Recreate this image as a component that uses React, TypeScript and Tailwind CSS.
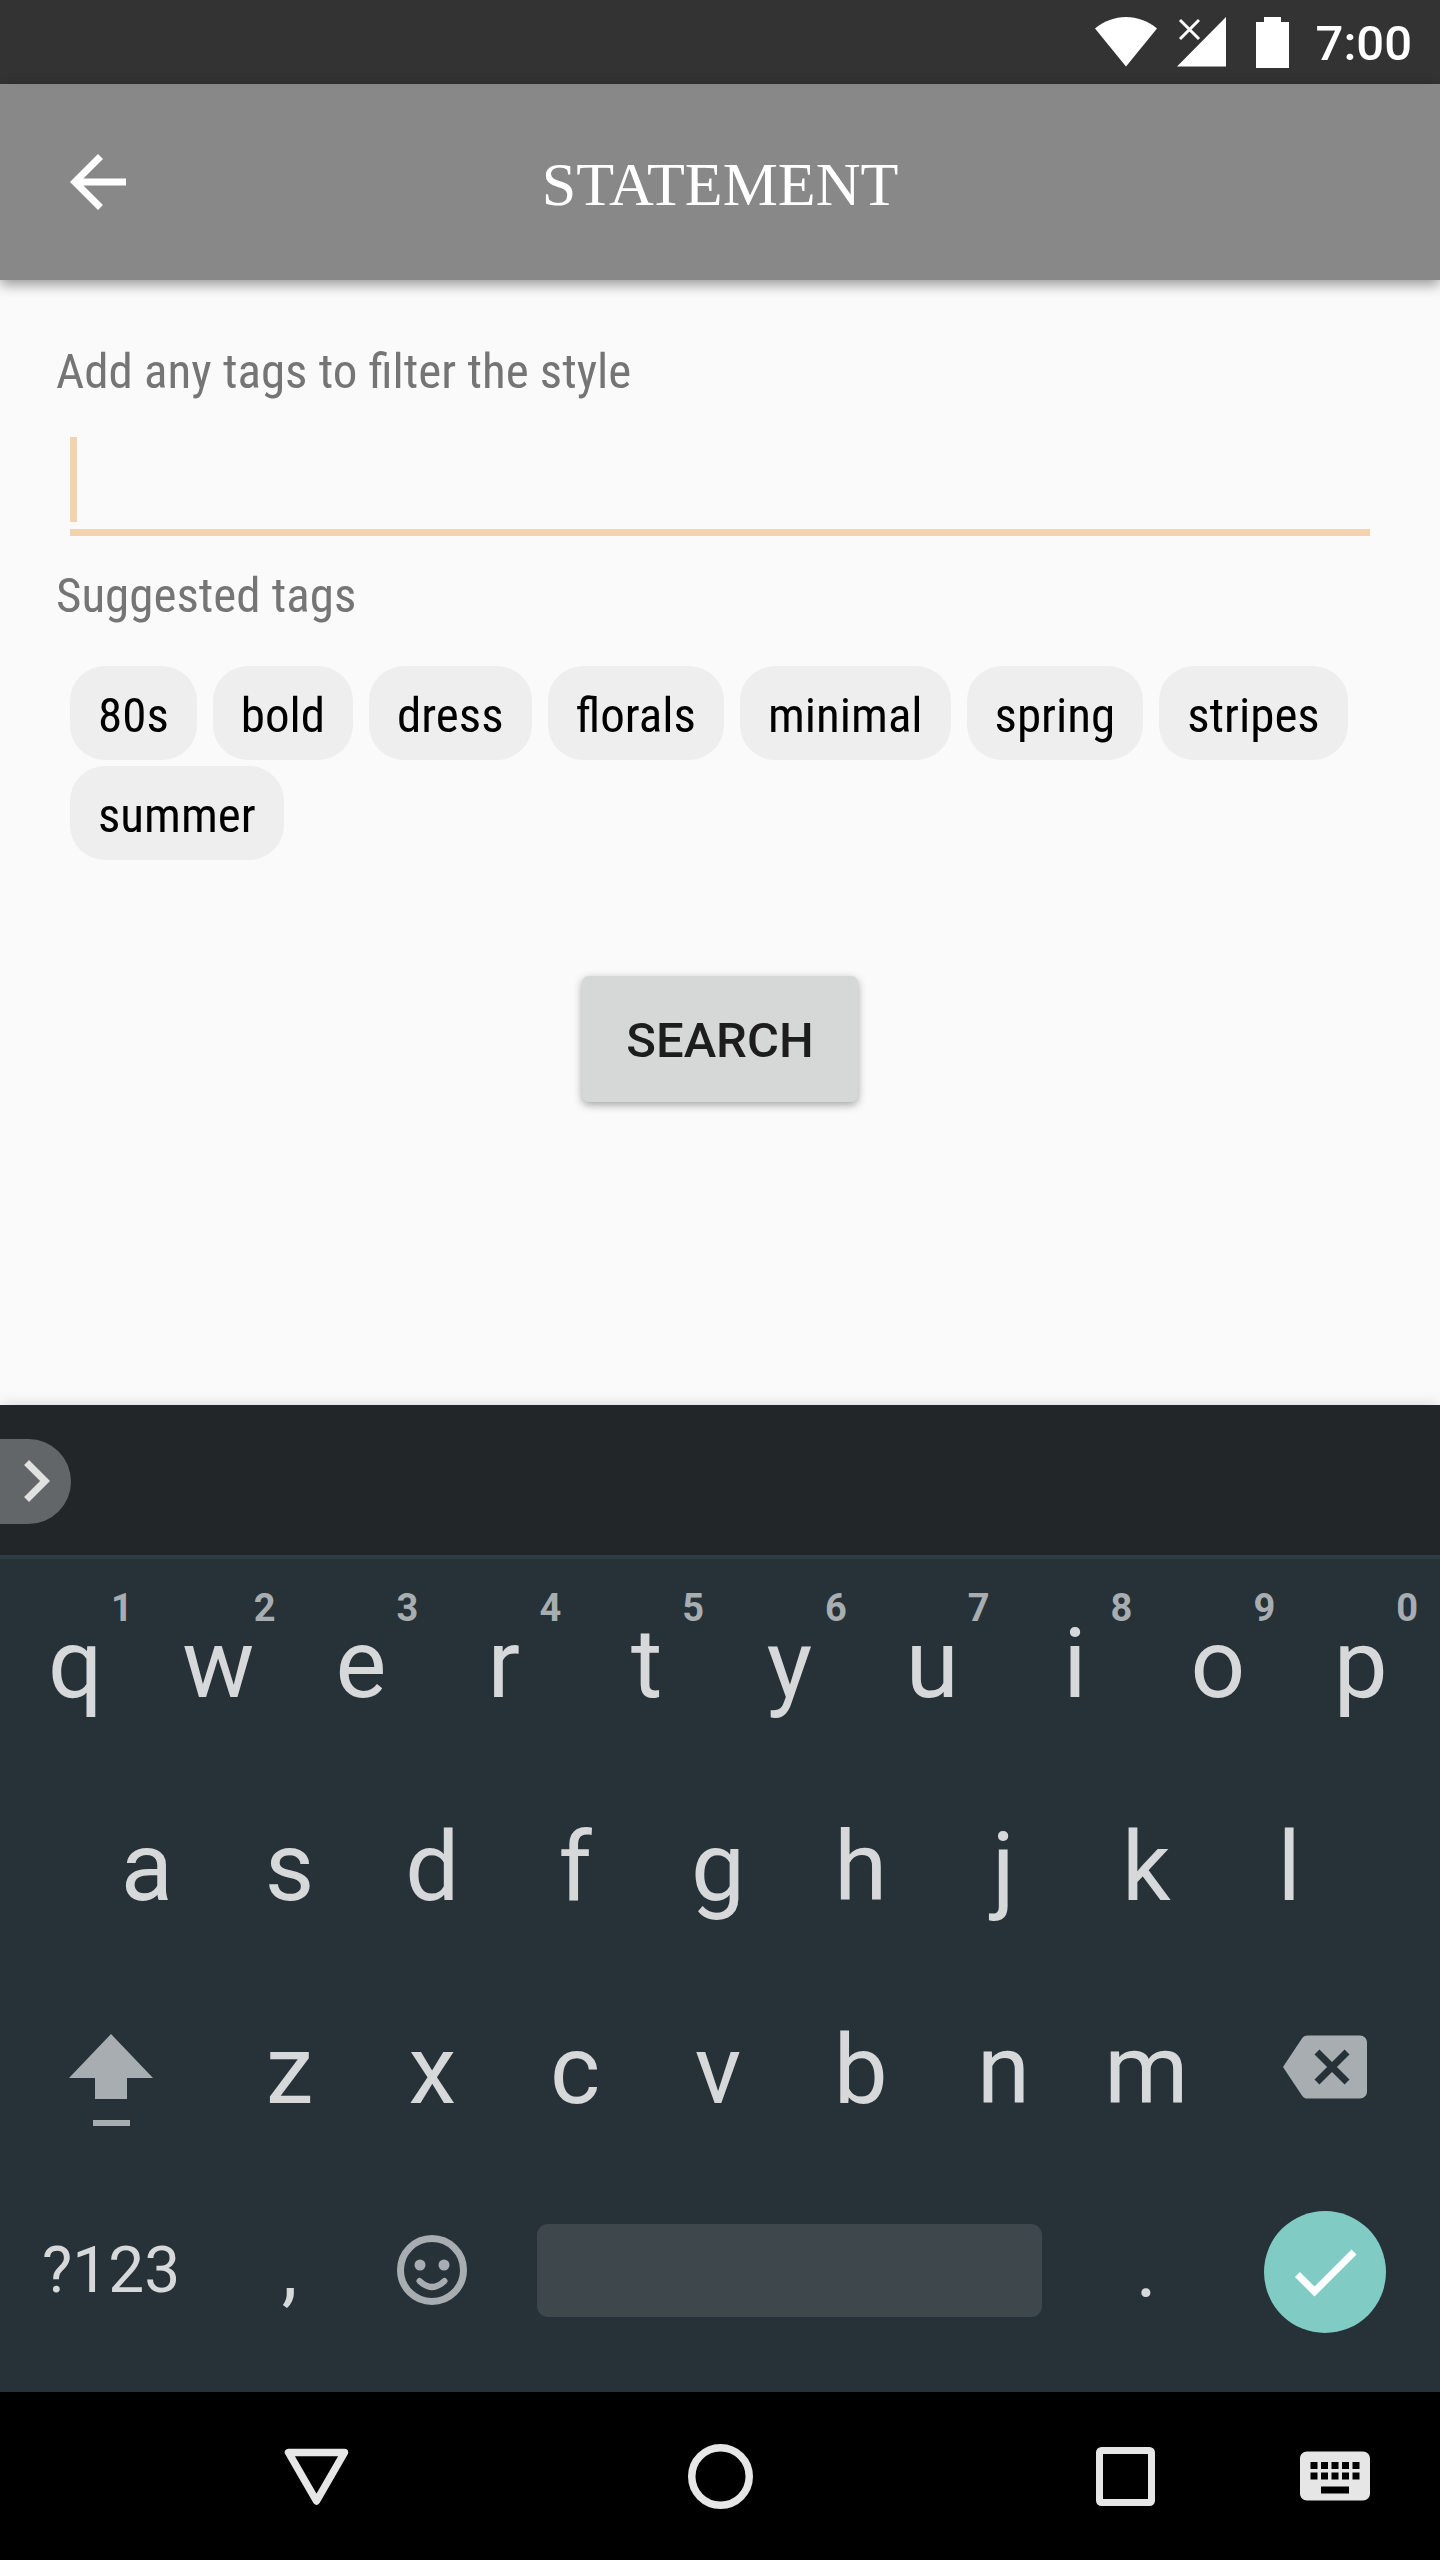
import type { ReactNode } from "react";

const tags = ["80s", "bold", "dress", "florals", "minimal", "spring", "stripes", "summer"];
const topRow = ["q", "w", "e", "r", "t", "y", "u", "i", "o", "p"];
const homeRow = ["a", "s", "d", "f", "g", "h", "j", "k", "l"];
const bottomRow = ["z", "x", "c", "v", "b", "n", "m"];

function Icon({ d, className }: { d: string; className: string }) {
  return (
    <svg viewBox="0 0 24 24" className={`size-[84px] shrink-0 ${className}`} fill="currentColor" aria-hidden="true">
      <path d={d} />
    </svg>
  );
}

function StatusBar() {
  return (
    <div className="flex h-[84px] items-center justify-end bg-[#333333] pr-7 text-white">
      <svg viewBox="0 0 62 50" className="mr-5 h-[50px] w-[62px]" fill="currentColor" aria-label="Wi-Fi">
        <path d="M31 49.5 0 11.5C9 4 20 0 31 0s22 4 31 11.5z" />
      </svg>
      <svg viewBox="0 0 50 50" className="mr-[29px] h-[50px] w-[50px]" fill="currentColor" aria-label="No signal">
        <path d="M49 0v49.500H0z" />
        <path d="M3 3l19 19M22 3L3 22" stroke="currentColor" strokeWidth="3" fill="none" />
      </svg>
      <svg viewBox="0 0 33 51" className="mr-[27px] h-[51px] w-[33px]" fill="currentColor" aria-label="Battery">
        <path d="M8 0h17v5h8v46H0V5h8z" />
      </svg>
      <time className="pt-1 text-[49px] leading-[58px] font-medium">7:00</time>
    </div>
  );
}

function Header() {
  return (
    <header className="z-10 grid h-[196px] grid-cols-[1fr_auto_1fr] items-center bg-[#888888] px-14 text-white shadow-[0_5px_12px_rgba(0,0,0,0.38)]">
      <button type="button" aria-label="Back" className="justify-self-start">
        <Icon d="M20 11H7.830l5.590-5.590L12 4l-8 8 8 8 1.410-1.410L7.830 13H20v-2z" className="text-white" />
      </button>
      <h1 className="pt-1 font-['Liberation_Serif',serif] text-[62px] leading-[68px]">STATEMENT</h1>
    </header>
  );
}

function SearchForm() {
  return (
    <main className="flex-1 bg-[#fafafa] px-14 pt-[63px] font-['Roboto_Condensed',Roboto,sans-serif] text-[49px] leading-[58px]">
      <label htmlFor="tags" className="block text-[#757575]">
        Add any tags to filter the style
      </label>
      <div className="relative mx-3.5 mt-[27px]">
        <input
          id="tags"
          type="text"
          className="block h-[108px] w-full border-b-[7px] border-[#f1d3b0] bg-transparent px-2 text-black caret-transparent outline-none"
        />
        <span className="absolute top-[9px] left-0 h-[85px] w-[7px] bg-[#f1d3b0]" />
      </div>
      <h2 className="mt-[31px] text-[#757575]">Suggested tags</h2>
      <ul className="mt-[41px] flex flex-wrap gap-x-4 gap-y-1.5 pl-3.5">
        {tags.map((tag) => (
          <li key={tag}>
            <button type="button" className="h-[94px] rounded-[35px] bg-[#eeeeee] px-7 pt-1.5 text-black">
              {tag}
            </button>
          </li>
        ))}
      </ul>
      <div className="mt-[116px] flex justify-center">
        <button
          type="button"
          className="h-[126px] rounded-[7px] bg-[#d6d8d7] px-11 pt-1 font-[Roboto,sans-serif] font-medium text-[#1d1d1d] shadow-[0_3px_8px_rgba(0,0,0,0.35)]"
        >
          SEARCH
        </button>
      </div>
    </main>
  );
}

function Key({ children, hint, label, className }: { children: ReactNode; hint?: string; label?: string; className: string }) {
  return (
    <button type="button" aria-label={label} className={`relative flex items-center justify-center ${className}`}>
      {children}
      {hint && (
        <span className="absolute top-6 right-[14px] text-[38px] leading-[50px] font-bold text-[#a7adb0]">{hint}</span>
      )}
    </button>
  );
}

const letter = "col-span-2 pt-1.5 text-[96px] leading-[112px]";

function Keyboard() {
  return (
    <section aria-label="Keyboard" className="z-10 bg-[#263238] text-[#d6d8da] shadow-[0_0_14px_rgba(0,0,0,0.15)]">
      <div className="flex h-[154px] items-center border-b-4 border-[#2f3c43] bg-[#222629]">
        <button
          type="button"
          aria-label="More options"
          className="mt-0.5 flex h-[85px] w-[71px] items-center justify-center rounded-r-full bg-[#636669]"
        >
          <Icon d="M10 6 8.590 7.410 13.170 12l-4.580 4.590L10 18l6-6z" className="text-[#e0e1e1]" />
        </button>
      </div>
      <div className="pr-2 pb-[21px] pl-1">
        <div className="grid h-[203px] grid-cols-20">
          {topRow.map((k, i) => (
            <Key key={k} hint={String((i + 1) % 10)} className={letter}>
              {k}
            </Key>
          ))}
        </div>
        <div className="grid h-[203px] grid-cols-20">
          {homeRow.map((k) => (
            <Key key={k} className={`${letter} first:col-start-2`}>
              {k}
            </Key>
          ))}
        </div>
        <div className="grid h-[203px] grid-cols-20">
          <Key label="Shift" className="col-span-3">
            <svg viewBox="0 0 84 92" className="mt-[26px] h-[92px] w-[84px] text-[#a7adb0]" fill="currentColor" aria-hidden="true">
              <path d="M42 0 84 44H58v21H26V44H0zM24 86h37v6H24z" />
            </svg>
          </Key>
          {bottomRow.map((k) => (
            <Key key={k} className={letter}>
              {k}
            </Key>
          ))}
          <Key label="Backspace" className="col-span-3">
            <Icon
              d="M22 3H7c-.69 0-1.230.35-1.590.88L0 12l5.410 8.110c.36.53.9.89 1.590.89h15c1.100 0 2-.9 2-2V5c0-1.100-.9-2-2-2zm-3 12.590L17.590 17 14 13.410 10.410 17 9 15.590 12.590 12 9 8.410 10.410 7 14 10.590 17.590 7 19 8.410 15.410 12 19 15.590z"
              className="text-[#a7adb0]"
            />
          </Key>
        </div>
        <div className="grid h-[203px] grid-cols-20">
          <Key className="col-span-3 pt-0.5 text-[64px] leading-[76px]">?123</Key>
          <Key className="col-span-2 text-[80px] leading-[94px]">,</Key>
          <Key label="Emoji" className="col-span-2">
            <svg viewBox="-42 -42 84 84" className="size-[84px] text-[#a7adb0]" fill="none" stroke="currentColor" aria-hidden="true">
              <circle r="31.500" strokeWidth="7" />
              <circle cx="-12" cy="-5" r="5.500" fill="currentColor" stroke="none" />
              <circle cx="12" cy="-5" r="5.500" fill="currentColor" stroke="none" />
              <path d="M-12.500 11Q0 23 12.500 11" strokeWidth="6" strokeLinecap="round" />
            </svg>
          </Key>
          <Key label="Space" className="col-span-8 px-[33px]">
            <span className="mt-0.5 h-[93px] w-full rounded-[11px] bg-[#3d474c]" />
          </Key>
          <Key className="col-span-2 text-[80px] leading-[94px]">.</Key>
          <Key label="Done" className="col-span-3">
            <span className="mt-1 flex size-[122px] items-center justify-center rounded-full bg-[#80cbc4]">
              <Icon d="M9 16.170 4.830 12l-1.420 1.410L9 19 21 7l-1.410-1.410z" className="text-white" />
            </span>
          </Key>
        </div>
      </div>
    </section>
  );
}

function NavigationBar() {
  return (
    <nav className="grid h-[168px] grid-cols-[210px_1fr_1fr_1fr_210px] items-center justify-items-center bg-black text-[#e6e6e6]">
      <button type="button" aria-label="Back" className="col-start-2 justify-self-start pl-[74px]">
        <svg viewBox="0 0 65 65" className="size-[65px]" fill="none" stroke="currentColor" strokeWidth="7.500" strokeLinejoin="round" aria-hidden="true">
          <path d="M4.500 8.500H60.500L32.500 57z" />
        </svg>
      </button>
      <button type="button" aria-label="Home" className="col-start-3">
        <svg viewBox="0 0 65 65" className="size-[65px]" fill="none" stroke="currentColor" strokeWidth="7.500" aria-hidden="true">
          <circle cx="32.500" cy="32.500" r="28.750" />
        </svg>
      </button>
      <button type="button" aria-label="Recent apps" className="col-start-4 justify-self-end pr-[75px]">
        <svg viewBox="0 0 59 59" className="size-[59px]" fill="none" stroke="currentColor" strokeWidth="7" aria-hidden="true">
          <rect x="3.500" y="3.500" width="52" height="52" rx="2" />
        </svg>
      </button>
      <button type="button" aria-label="Switch keyboard">
        <Icon
          d="M20 5H4c-1.100 0-2 .9-2 2v10c0 1.100.9 2 2 2h16c1.100 0 2-.9 2-2V7c0-1.100-.9-2-2-2zm-9 3h2v2h-2V8zm0 3h2v2h-2v-2zM8 8h2v2H8V8zm0 3h2v2H8v-2zm-1 2H5v-2h2v2zm0-3H5V8h2v2zm9 7H8v-2h8v2zm0-4h-2v-2h2v2zm0-3h-2V8h2v2zm3 3h-2v-2h2v2zm0-3h-2V8h2v2z"
          className="text-[#e6e6e6]"
        />
      </button>
    </nav>
  );
}

export default function App() {
  return (
    <div className="flex min-h-screen flex-col bg-[#fafafa] font-[Roboto,sans-serif]">
      <StatusBar />
      <Header />
      <SearchForm />
      <Keyboard />
      <NavigationBar />
    </div>
  );
}
